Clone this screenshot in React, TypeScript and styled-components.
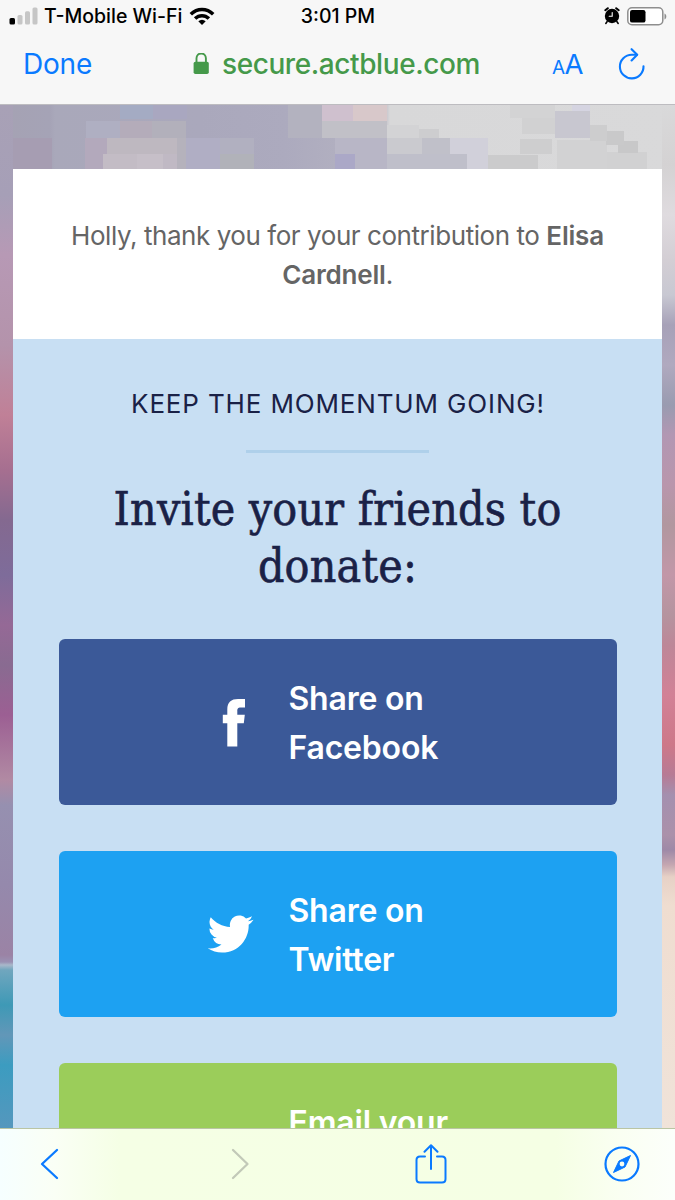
import React from "react";
import styled, { createGlobalStyle } from "styled-components";

const GlobalStyle = createGlobalStyle`
  * { box-sizing: border-box; }
  html, body { margin: 0; padding: 0; overflow: hidden; }
  body { font-family: Inter, "Liberation Sans", sans-serif; }
  svg { display: block; flex: none; }
`;

const Phone = styled.div`
  width: 675px;
  height: 1200px;
  display: flex;
  flex-direction: column;
  overflow: hidden;
`;

const TopChrome = styled.header`
  flex: none;
  height: 105px;
  background: #f7f7f7;
  border-bottom: 1px solid #bdbcc0;
`;

const StatusBar = styled.div`
  height: 32px;
  display: grid;
  grid-template-columns: 1fr auto 1fr;
  align-items: center;
  padding: 0 8px 0 9px;
  color: #000;
  font-size: 19.5px;
  font-weight: 500;
  line-height: 32px;
`;

const StatusSide = styled.div<{ $end?: boolean }>`
  display: flex;
  align-items: center;
  justify-content: ${(p) => (p.$end ? "flex-end" : "flex-start")};
  gap: 7px;
`;

const Carrier = styled.span`
  margin-left: -1px;
  white-space: nowrap;
`;

const AddressBar = styled.div`
  height: 64px;
  display: flex;
  align-items: center;
  padding: 0 29px 0 23px;
  font-size: 28px;
  line-height: 64px;
`;

const TextButton = styled.span`
  width: 170px;
  color: #0a7aff;
  letter-spacing: -0.2px;
`;

const Address = styled.div`
  width: 359px;
  display: flex;
  align-items: center;
  gap: 12px;
  color: #45994a;
  font-weight: 500;
  letter-spacing: -0.42px;
`;

const TextSize = styled.span`
  flex: 1;
  padding-top: 3px;
  display: flex;
  align-items: baseline;
  color: #0a7aff;
  font-size: 27.5px;
  letter-spacing: -0.5px;
`;

const SmallA = styled.span`
  font-size: 19px;
`;

/* Cloud patches of the backdrop photo: x, y, width, height, colour. */
const clouds: [number, number, number, number, string][] = [
  [103, 49, 34, 16, "#c3bcc5"],
  [137, 49, 26, 16, "#c6bfc8"],
  [163, 49, 14, 16, "#c0b9c4"],
  [107, 33, 70, 16, "#beb8c0"],
  [85, 33, 22, 32, "#b3a9bc"],
  [177, 33, 9, 32, "#b5b2bc"],
  [120, 16, 32, 17, "#b4acba"],
  [152, 16, 34, 17, "#b2b0bb"],
  [86, 16, 34, 17, "#afafc2"],
  [120, 0, 33, 14, "#a4abc3"],
  [153, 0, 34, 14, "#a9a7c0"],
  [186, 33, 34, 32, "#b0aec4"],
  [220, 49, 34, 16, "#b1b2b9"],
  [220, 33, 34, 16, "#b1b0c0"],
  [0, 33, 52, 32, "#a69db2"],
  [288, 0, 34, 33, "#b3b2bf"],
  [320, 0, 33, 16, "#cfc0ce"],
  [353, 0, 34, 16, "#d8c8ca"],
  [320, 16, 67, 17, "#c1c0c7"],
  [335, 49, 20, 16, "#aba8c7"],
  [335, 33, 52, 32, "#b8b6c6"],
  [387, 49, 80, 16, "#bfbfca"],
  [387, 33, 35, 16, "#cacacf"],
  [422, 33, 28, 16, "#c0c0c9"],
  [450, 33, 38, 32, "#d1d0da"],
  [387, 20, 32, 13, "#d3d3d5"],
  [419, 24, 20, 9, "#cdcdcf"],
  [555, 6, 35, 27, "#c8c7d0"],
  [572, 0, 18, 6, "#d5d4e1"],
  [510, 0, 45, 13, "#d3d3d4"],
  [522, 13, 33, 16, "#d1d1d2"],
  [590, 20, 17, 16, "#cdcdce"],
  [606, 26, 18, 14, "#c9c9ca"],
  [618, 36, 20, 12, "#c8c8c9"],
  [520, 34, 32, 15, "#cececf"],
  [488, 50, 50, 15, "#cbcbcc"],
  [557, 35, 50, 30, "#d2d2d3"],
  [607, 47, 40, 18, "#d1d1d2"],
];

const cloudImages = clouds.map(([, , , , c]) => `linear-gradient(${c}, ${c})`).join(",");
const cloudSizes = clouds.map(([, , w, h]) => `${w}px ${h}px`).join(",");
const cloudPositions = clouds.map(([x, y]) => `${x}px ${y}px`).join(",");

const Page = styled.main`
  flex: 1;
  min-height: 0;
  overflow: hidden;
  padding: 64px 13px 0;
  background-color: #d9d9da;
  background-repeat: no-repeat;
  background-image:
    linear-gradient(#a8a1b6 0, #a69fb7 90px, #b799b5 150px, #b493ab 240px, #c08097 310px, #a66f90 365px, #846990 415px, #7e6c9a 470px, #956996 520px, #896b91 560px, #9c5f93 610px, #b18aa3 675px, #9690b0 700px, #9589ac 780px, #9b83a5 850px, #9a91b3 857px, #a9b8ca 860px, #70a6be 865px, #3e99b6 900px, #6297b8 930px, #3c9cc0 960px, #5597bd 1024px),
    linear-gradient(#d9d9da 0, #d4d2d3 60px, #dfdbdf 110px, #d3ced4 155px, #c8c8d2 190px, #a7a1b8 220px, #b0a9bf 260px, #999bb0 300px, #b297b3 330px, #b996ac 380px, #b1979f 420px, #c297a8 470px, #b5949f 510px, #bd8798 540px, #d28196 590px, #cd7889 640px, #b77b95 670px, #a490af 690px, #ab91aa 730px, #9e89a7 745px, #c5a7b1 760px, #e7d1c6 772px, #efddd0 800px, #f0e3d9 1024px),
    ${cloudImages},
    linear-gradient(90deg, #a5a2b3 0, #a5a3b6 50px, #a9a8ba 55px, #aaa8bc 200px, #acaabe 285px, #b1afc0 335px, #c6c4cc 386px, #d8d8d9 390px, #d9d9da 100%);
  background-size: 13px 1024px, 13px 1024px, ${cloudSizes}, 675px 64px;
  background-position: 0 0, 662px 0, ${cloudPositions}, 0 0;
`;

const ThankYou = styled.section`
  height: 170px;
  padding: 47px 40px 0;
  background: #fff;
  color: #656565;
  text-align: center;
  font-size: 26px;
  line-height: 39px;
  letter-spacing: -0.44px;

  strong {
    font-weight: 600;
    letter-spacing: -0.2px;
  }
`;

const SharePanel = styled.section`
  height: 1000px;
  padding: 45px 46px 0;
  display: flex;
  flex-direction: column;
  align-items: center;
  background: #c8dff3;
  color: #1a2146;
`;

const Eyebrow = styled.p`
  margin: 0;
  font-size: 26px;
  line-height: 40px;
  letter-spacing: 0.85px;
  margin-right: -1px;
  white-space: nowrap;
`;

const Rule = styled.hr`
  width: 183px;
  height: 3px;
  margin: 26px 0 28px;
  border: 0;
  background: #afd0ea;
`;

const Heading = styled.h1`
  margin: 0 0 44px;
  font-family: "DejaVu Serif Condensed", "DejaVu Serif", serif;
  font-stretch: condensed;
  font-size: 46px;
  font-weight: 400;
  line-height: 57px;
  letter-spacing: 0.2px;
  -webkit-text-stroke: 0.6px #1a2146;
  text-align: center;
  white-space: nowrap;
`;

const ShareButton = styled.a<{ $color: string }>`
  flex: none;
  width: 558px;
  height: 166px;
  margin-bottom: 46px;
  padding-left: 144px;
  display: flex;
  align-items: center;
  gap: 30px;
  border-radius: 6px;
  background: ${(p) => p.$color};
  color: #fff;
`;

const IconSlot = styled.span<{ $shift?: number }>`
  width: 56px;
  padding-left: ${(p) => p.$shift ?? 0}px;
  display: flex;
  justify-content: center;
`;

const ShareLabel = styled.span`
  padding-top: 2px;
  font-size: 32px;
  font-weight: 600;
  line-height: 49px;
  letter-spacing: -0.2px;
  white-space: nowrap;
`;

const Toolbar = styled.footer`
  flex: none;
  height: 72px;
  display: grid;
  grid-template-columns: 191px 184px 1fr auto;
  align-items: center;
  padding: 0 35px 2px 40px;
  border-top: 1px solid #bac5a4;
  background: linear-gradient(90deg, #f6ffff 0, #fafff5 55px, #f5ffe5 120px, #f5ffe4 555px, #fafff2 620px, #fcfffb 675px);
`;

const Signal = () => (
  <svg width="29" height="18" viewBox="0 0 29 18">
    <rect x="0.5" y="11" width="5.5" height="6.5" rx="1.5" fill="#000" />
    <rect x="8.5" y="8" width="5" height="9.5" rx="1.5" fill="#c6c6c6" />
    <rect x="16" y="4.2" width="5" height="13.3" rx="1.5" fill="#c6c6c6" />
    <rect x="23.5" y="0.5" width="5" height="17" rx="1.5" fill="#c6c6c6" />
  </svg>
);

const Wifi = () => (
  <svg width="26" height="19" viewBox="0 0 26 19" fill="none" stroke="#000" strokeWidth="3.5">
    <path d="M1.8 7.3C8.2 1 17.8 1 24.2 7.3" />
    <path d="M6.1 11.6c4-3.900 9.800-3.900 13.800 0" />
    <path d="M9.300 14.300q3.700-3.100 7.400 0L13 18z" fill="#000" stroke="none" />
  </svg>
);

const Alarm = () => (
  <svg width="16" height="18" viewBox="0 0 16 18" fill="none" stroke="#000" strokeLinecap="round">
    <circle cx="8" cy="9" r="7.2" fill="#000" stroke="none" />
    <path d="M1.300 3.200 3.800 1.200M14.700 3.200 12.200 1.200" strokeWidth="2" />
    <path d="m3.200 14.500-1.400 2M12.800 14.500l1.400 2" strokeWidth="1.5" />
    <path d="M8.200 5.500v3.700H5.200" stroke="#fff" strokeWidth="1.1" />
  </svg>
);

const Battery = () => (
  <svg width="40" height="19" viewBox="0 0 40 19">
    <rect x="0.8" y="0.8" width="35" height="17" rx="4.2" fill="#fff" stroke="#8e8e8e" strokeWidth="1.5" />
    <rect x="3" y="3" width="15.5" height="12.6" rx="2.2" fill="#000" />
    <path d="M37.500 6.500c2.400 1 2.400 5 0 6z" fill="#8e8e8e" />
  </svg>
);

const Lock = () => (
  <svg width="17" height="22" viewBox="-0.3 0.5 17 22">
    <rect x="0.3" y="9.2" width="15.2" height="12.4" rx="1.8" fill="#45994a" />
    <path d="M3.200 10V5.800C3.200-.7 12.600-.7 12.600 5.800V10" fill="none" stroke="#45994a" strokeWidth="1.9" />
  </svg>
);

const Reload = () => (
  <svg width="28" height="32" viewBox="0 0 28 32" fill="none" stroke="#0a7aff" strokeWidth="2.1" strokeLinecap="round" strokeLinejoin="round">
    <path d="M25.500 18.200A11.800 11.800 0 1 1 13.700 6.800h5.300" />
    <path d="m13.600 1.200 5.600 5.600-5.600 5.700" />
  </svg>
);

const FacebookMark = () => (
  <svg width="24" height="49" viewBox="0 0 24 49">
    <path d="M5.300 48.500V25.300H.8v-8.500h4.500V11.500C5.300 4.200 9.200 1 16 1h7v8.500h-4.200c-3 0-3.500 1.200-3.500 3.600v3.700h7.500l-1 8.500h-6.500v23.200z" fill="#fff" />
  </svg>
);

const TwitterMark = () => (
  <svg width="47" height="40" viewBox="0 1.5 24 21">
    <path d="M23.950 4.570a10 10 0 0 1-2.820.770 4.960 4.960 0 0 0 2.160-2.720c-.950.550-2 .950-3.130 1.180a4.920 4.920 0 0 0-8.380 4.480C7.690 8.090 4.070 6.130 1.640 3.160a4.820 4.820 0 0 0-.670 2.480c0 1.710.870 3.210 2.190 4.100a4.900 4.900 0 0 1-2.230-.620v.060a4.920 4.920 0 0 0 3.950 4.830 5 5 0 0 1-2.210.080 4.940 4.940 0 0 0 4.600 3.420A9.870 9.870 0 0 1 0 19.540a13.990 13.990 0 0 0 7.550 2.210c9.050 0 14-7.500 14-13.980 0-.210 0-.420-.020-.630a9.940 9.940 0 0 0 2.460-2.550z" fill="#fff" />
  </svg>
);

const Chevron = ({ forward = false }: { forward?: boolean }) => (
  <svg width="19" height="32" viewBox="0 0 19 32" fill="none" stroke={forward ? "#c2c9b8" : "#0a7aff"} strokeWidth="2.3" strokeLinecap="round" strokeLinejoin="round">
    <path d={forward ? "M2 2 16.5 16 2 30" : "M17 2 2 16l15 14"} />
  </svg>
);

const ShareGlyph = () => (
  <svg width="32" height="40" viewBox="0 0 32 40" fill="none" stroke="#0a7aff" strokeWidth="2" strokeLinecap="round" strokeLinejoin="round">
    <path d="M10 12.500H5Q1.500 12.500 1.500 16v19q0 3.500 3.500 3.500h22q3.500 0 3.500-3.500V16q0-3.500-3.500-3.500h-5" />
    <path d="M16 25V1.500M9.500 7.800 16 1.300l6.500 6.500" />
  </svg>
);

const Compass = () => (
  <svg width="36" height="36" viewBox="0 0 36 36">
    <circle cx="18" cy="18" r="16.5" fill="none" stroke="#0a7aff" strokeWidth="2.2" />
    <path d="M26.500 9.500 21 21 9.500 26.500 15 15z" fill="#0a7aff" stroke="#0a7aff" strokeLinejoin="round" />
    <circle cx="18" cy="18" r="2.4" fill="#f9fff0" />
  </svg>
);

export default function App() {
  return (
    <>
      <GlobalStyle />
      <Phone>
        <TopChrome>
          <StatusBar>
            <StatusSide>
              <Signal />
              <Carrier>T-Mobile Wi-Fi</Carrier>
              <Wifi />
            </StatusSide>
            <span>3:01 PM</span>
            <StatusSide $end>
              <Alarm />
              <Battery />
            </StatusSide>
          </StatusBar>
          <AddressBar>
            <TextButton>Done</TextButton>
            <Address>
              <Lock />
              <span>secure.actblue.com</span>
            </Address>
            <TextSize><SmallA>A</SmallA>A</TextSize>
            <Reload />
          </AddressBar>
        </TopChrome>
        <Page>
          <ThankYou>
            Holly, thank you for your contribution to <strong>Elisa<br />Cardnell</strong>.
          </ThankYou>
          <SharePanel>
            <Eyebrow>KEEP THE MOMENTUM GOING!</Eyebrow>
            <Rule />
            <Heading>Invite your friends to<br />donate:</Heading>
            <ShareButton $color="#3b5998">
              <IconSlot $shift={7}><FacebookMark /></IconSlot>
              <ShareLabel>Share on<br />Facebook</ShareLabel>
            </ShareButton>
            <ShareButton $color="#1da1f2">
              <IconSlot><TwitterMark /></IconSlot>
              <ShareLabel>Share on<br />Twitter</ShareLabel>
            </ShareButton>
            <ShareButton $color="#9bcd5a">
              <IconSlot />
              <ShareLabel>Email your<br />friends</ShareLabel>
            </ShareButton>
          </SharePanel>
        </Page>
        <Toolbar>
          <Chevron />
          <Chevron forward />
          <ShareGlyph />
          <Compass />
        </Toolbar>
      </Phone>
    </>
  );
}
